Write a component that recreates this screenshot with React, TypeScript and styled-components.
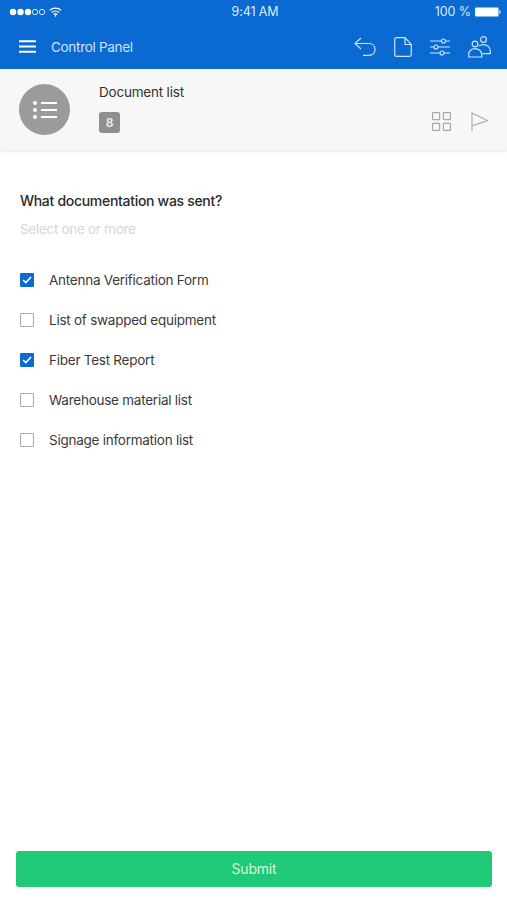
import React from "react";
import styled, { createGlobalStyle } from "styled-components";

const GlobalStyle = createGlobalStyle`
  html, body {
    margin: 0;
    padding: 0;
    background: #fff;
    font-family: Inter, "Liberation Sans", sans-serif;
  }
`;

const options = [
  { label: "Antenna Verification Form", checked: true },
  { label: "List of swapped equipment", checked: false },
  { label: "Fiber Test Report", checked: true },
  { label: "Warehouse material list", checked: false },
  { label: "Signage information list", checked: false },
];

const SignalDots = () => (
  <svg width="36" height="8" viewBox="0 0 36 8">
    <circle cx="4" cy="4" r="3.2" fill="#fff" />
    <circle cx="11.5" cy="4" r="3.2" fill="#fff" />
    <circle cx="19" cy="4" r="3.2" fill="#fff" />
    <circle cx="26" cy="4" r="2.7" fill="none" stroke="#fff" strokeWidth="0.8" />
    <circle cx="33" cy="4" r="2.7" fill="none" stroke="#fff" strokeWidth="0.8" />
  </svg>
);

const Wifi = () => (
  <svg width="13" height="10" viewBox="0 0 13 10" fill="none" stroke="#fff" strokeWidth="1.3">
    <path d="M0.8 3.4C4 0.4 9 0.4 12.2 3.4" />
    <path d="M2.8 5.5C4.9 3.6 8.1 3.6 10.2 5.5" />
    <path d="M4.8 7.4C5.8 6.6 7.2 6.6 8.2 7.4" />
    <circle cx="6.5" cy="8.9" r="0.8" fill="#fff" stroke="none" />
  </svg>
);

const Battery = () => (
  <svg width="26" height="10" viewBox="0 0 26 10">
    <rect x="0" y="0.5" width="23.5" height="9" rx="1" fill="#fff" />
    <rect x="24.2" y="3.3" width="1.3" height="3.4" fill="#fff" opacity="0.8" />
  </svg>
);

const Menu = () => (
  <svg width="17" height="13" viewBox="0 0 17 13" stroke="#fff" strokeWidth="2">
    <path d="M0 1.2H17M0 6.5H17M0 11.8H17" />
  </svg>
);

const Undo = () => (
  <svg width="22" height="19" viewBox="0 0 22 19" fill="none" stroke="#cfe2f8" strokeWidth="1.2">
    <path d="M7 1L1 6.5L7 12" />
    <path d="M1 6.5H15C18.5 6.5 21 9 21 12.5C21 16 18.5 18.3 15 18.3H9" />
  </svg>
);

const Doc = () => (
  <svg width="18" height="20" viewBox="0 0 18 20" fill="none" stroke="#cfe2f8" strokeWidth="1.2">
    <path d="M2.5 0.7H11L17.3 7.5V17.5C17.3 18.6 16.6 19.3 15.5 19.3H2.5C1.4 19.3 0.7 18.6 0.7 17.5V2.5C0.7 1.4 1.4 0.7 2.5 0.7Z" />
    <path d="M11 0.7V7.5H17.3" />
  </svg>
);

const Sliders = () => (
  <svg width="20" height="18" viewBox="0 0 20 18" fill="none" stroke="#cfe2f8" strokeWidth="1.1">
    <path d="M0 3H11.5M15.5 3H20M0 9H4M8 9H20M0 15H10M14 15H20" />
    <circle cx="13.5" cy="3" r="2" />
    <circle cx="6" cy="9" r="2" />
    <circle cx="12" cy="15" r="2" />
  </svg>
);

const People = () => (
  <svg width="23" height="22" viewBox="0 0 23 22" fill="none" stroke="#cfe2f8" strokeWidth="1.2">
    <circle cx="7" cy="8" r="2.8" />
    <circle cx="15.5" cy="3.5" r="2.9" />
    <path d="M0.7 21V18.5C0.7 15 3.5 12.6 7 12.6C10.5 12.6 13.8 15 13.8 18.5V21Z" />
    <path d="M11 10C12.4 9 13.9 8.6 15.5 8.6C19.3 8.6 22.3 11.3 22.3 15V17.6H14.5" />
  </svg>
);

const ListGlyph = () => (
  <svg width="24" height="18" viewBox="0 0 24 18" fill="#fff" stroke="#fff">
    <circle cx="2" cy="2" r="2" stroke="none" />
    <circle cx="2" cy="9" r="2" stroke="none" />
    <circle cx="2" cy="16" r="2" stroke="none" />
    <path d="M8 2H24M8 9H24M8 16H24" strokeWidth="1.8" />
  </svg>
);

const Grid = () => (
  <svg width="19" height="19" viewBox="0 0 19 19" fill="none" stroke="#a8a8a8" strokeWidth="1.2">
    <rect x="0.6" y="0.6" width="7" height="7" rx="0.6" />
    <rect x="11.4" y="0.6" width="7" height="7" rx="0.6" />
    <rect x="0.6" y="11.4" width="7" height="7" rx="0.6" />
    <rect x="11.4" y="11.4" width="7" height="7" rx="0.6" />
  </svg>
);

const Flag = () => (
  <svg width="17" height="19" viewBox="0 0 17 19" fill="none" stroke="#a8a8a8" strokeWidth="1.1">
    <path d="M1 19V1L16.5 8.5L1 14" />
  </svg>
);

const Tick = () => (
  <svg width="10" height="8" viewBox="0 0 10 8" fill="none" stroke="#fff" strokeWidth="1.6">
    <path d="M1 4L3.8 6.6L9 1" />
  </svg>
);

export default function App() {
  return (
    <>
      <GlobalStyle />
      <Page>
        <TopBar>
          <StatusBar>
            <StatusSide>
              <SignalDots />
              <Wifi />
            </StatusSide>
            <StatusTime>9:41 AM</StatusTime>
            <BatterySide>
              <span>100 %</span>
              <Battery />
            </BatterySide>
          </StatusBar>
          <NavBar>
            <NavLeft>
              <Menu />
              <NavTitle>Control Panel</NavTitle>
            </NavLeft>
            <NavIcons>
              <Undo />
              <Doc />
              <Sliders />
              <People />
            </NavIcons>
          </NavBar>
        </TopBar>

        <ListHeader>
          <Avatar>
            <ListGlyph />
          </Avatar>
          <HeaderText>
            <HeaderTitle>Document list</HeaderTitle>
            <CountBadge>8</CountBadge>
          </HeaderText>
          <HeaderActions>
            <Grid />
            <Flag />
          </HeaderActions>
        </ListHeader>

        <Content>
          <Question>What documentation was sent?</Question>
          <Hint>Select one or more</Hint>
          <OptionList>
            {options.map((o) => (
              <Option key={o.label}>
                <CheckBox $checked={o.checked}>{o.checked && <Tick />}</CheckBox>
                <OptionLabel>{o.label}</OptionLabel>
              </Option>
            ))}
          </OptionList>
        </Content>

        <Footer>
          <SubmitButton>Submit</SubmitButton>
        </Footer>
      </Page>
    </>
  );
}

const Page = styled.div`
  width: 507px;
  height: 900px;
  display: flex;
  flex-direction: column;
  overflow: hidden;
  background: #fff;
`;

const TopBar = styled.div`
  height: 69px;
  flex-shrink: 0;
  background: #0a6ad2;
  display: flex;
  flex-direction: column;
`;

const StatusBar = styled.div`
  height: 23px;
  padding: 0 6px 1px 9px;
  display: grid;
  grid-template-columns: 1fr auto 1fr;
  align-items: center;
  color: #dcebfb;
  font-size: 12.5px;
  letter-spacing: -0.1px;
`;

const StatusSide = styled.div`
  display: flex;
  align-items: center;
  gap: 4px;
`;

const StatusTime = styled.div`
  text-align: center;
`;

const BatterySide = styled(StatusSide)`
  justify-content: flex-end;
`;

const NavBar = styled.div`
  flex: 1;
  display: flex;
  align-items: center;
  justify-content: space-between;
  padding: 0 16px 0 19px;
`;

const NavLeft = styled.div`
  display: flex;
  align-items: center;
  gap: 15px;
`;

const NavTitle = styled.div`
  color: #cfe2f8;
  font-size: 13.5px;
  letter-spacing: -0.3px;
`;

const NavIcons = styled.div`
  display: flex;
  align-items: center;
  gap: 18px;
`;

const ListHeader = styled.div`
  height: 81px;
  flex-shrink: 0;
  display: flex;
  align-items: center;
  padding: 0 19px;
  background: #f7f7f7;
  box-shadow: 0 1px 3px rgba(0, 0, 0, 0.12);
  position: relative;
`;

const Avatar = styled.div`
  width: 51px;
  height: 51px;
  border-radius: 50%;
  background: #9b9b9b;
  display: flex;
  align-items: center;
  justify-content: center;
`;

const HeaderText = styled.div`
  margin-left: 29px;
  height: 81px;
  display: flex;
  flex-direction: column;
  align-items: flex-start;
`;

const HeaderTitle = styled.div`
  margin-top: 15px;
  font-size: 13.5px;
  line-height: 17px;
  letter-spacing: -0.2px;
  color: #333;
`;

const CountBadge = styled.div`
  margin-top: 11px;
  width: 21px;
  height: 21px;
  border-radius: 3px;
  background: #8f8f8f;
  color: #f0f0f0;
  font-size: 12px;
  font-weight: 600;
  display: flex;
  align-items: center;
  justify-content: center;
`;

const HeaderActions = styled.div`
  margin-left: auto;
  align-self: flex-end;
  margin-bottom: 19px;
  display: flex;
  gap: 20px;
`;

const Content = styled.div`
  flex: 1;
  padding: 42px 20px 0;
`;

const Question = styled.div`
  font-size: 14px;
  font-weight: 500;
  line-height: 18px;
  letter-spacing: -0.3px;
  color: #2a2a2a;
`;

const Hint = styled.div`
  margin-top: 10px;
  font-size: 13.5px;
  line-height: 18px;
  letter-spacing: -0.3px;
  color: #d6d6d6;
`;

const OptionList = styled.div`
  margin-top: 22px;
  display: flex;
  flex-direction: column;
`;

const Option = styled.div`
  height: 40px;
  display: flex;
  align-items: center;
  gap: 15px;
`;

const CheckBox = styled.div<{ $checked: boolean }>`
  width: 14px;
  height: 14px;
  box-sizing: border-box;
  border-radius: 1px;
  display: flex;
  align-items: center;
  justify-content: center;
  background: ${(p) => (p.$checked ? "#0a6ad2" : "#fff")};
  border: 1px solid ${(p) => (p.$checked ? "#0a6ad2" : "#a9a9a9")};
`;

const OptionLabel = styled.div`
  font-size: 13.5px;
  line-height: 16px;
  letter-spacing: -0.25px;
  padding-bottom: 1px;
  color: #3a3a3a;
`;

const Footer = styled.div`
  padding: 0 15px 13px 16px;
`;

const SubmitButton = styled.button`
  width: 100%;
  height: 36px;
  border: none;
  border-radius: 3px;
  background: #20c975;
  color: #d5f6e4;
  font-family: inherit;
  font-size: 14px;
  letter-spacing: -0.2px;
  padding: 0 0 2px;
`;
